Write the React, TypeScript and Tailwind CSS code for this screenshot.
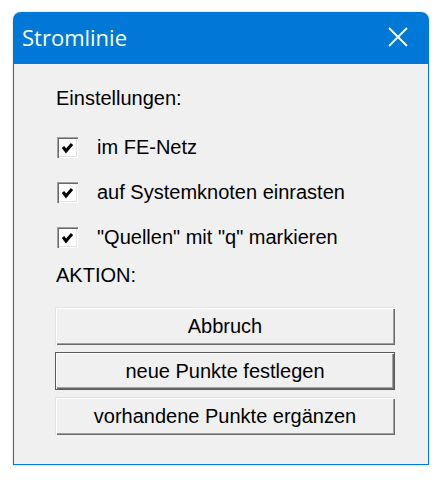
import React from "react";

function CheckBox() {
  return (
    <div className="relative w-[21px] h-[21px] bg-white shrink-0 shadow-[inset_1px_1px_0_#a0a0a0,inset_2px_2px_0_#696969,inset_-1px_-1px_0_#ffffff,inset_-2px_-2px_0_#e3e3e3]">
      <svg className="absolute left-0 top-0" width="21" height="21" viewBox="0 0 21 21">
        <polyline points="6,10 9,14 15,7" fill="none" stroke="#000" strokeWidth="3" strokeLinecap="butt" strokeLinejoin="miter" />
      </svg>
    </div>
  );
}

function Row({ label }: { label: string }) {
  return (
    <div className="flex items-center h-[24px]">
      <div className="ml-[1px]">
        <CheckBox />
      </div>
      <span className="ml-[19px] whitespace-nowrap">{label}</span>
    </div>
  );
}

function Btn({ label, def }: { label: string; def?: boolean }) {
  return (
    <div
      className={
        "w-[340px] h-[38px] flex items-center justify-center bg-[#f0f0f0] whitespace-nowrap " +
        (def
          ? "border border-[#5a5a5a] shadow-[inset_1px_1px_0_#ffffff,inset_-1px_-1px_0_#696969,inset_-2px_-2px_0_#a0a0a0]"
          : "shadow-[inset_1px_1px_0_#e3e3e3,inset_2px_2px_0_#ffffff,inset_-1px_-1px_0_#696969,inset_-2px_-2px_0_#a0a0a0]")
      }
    >
      {label}
    </div>
  );
}

export default function App() {
  return (
    <div className="w-[439px] h-[480px] bg-white overflow-hidden pt-[12px] pl-[13px]">
      <div className="w-[416px] h-[453px] flex flex-col rounded-t-[8px] overflow-hidden shadow-[0_0_2px_rgba(0,0,0,0.25)]">
        <div className="h-[52px] bg-[#0078d7] flex items-center justify-between pl-[9px] pr-[21px] shrink-0">
          <span className="text-white text-[22px] leading-none font-['Segoe_UI','Open_Sans',sans-serif] mt-[-3px]">Stromlinie</span>
          <svg width="20" height="20" viewBox="0 0 20 20" className="mt-[-2px]">
            <path d="M1 1 L19 19 M19 1 L1 19" stroke="#ffffff" strokeWidth="1.8" />
          </svg>
        </div>
        <div className="flex-1 bg-[#f0f0f0] border-x border-b border-[#0078d7] pt-[22px] pl-[42px] text-[20px] leading-[24px] text-black font-['Liberation_Sans',Arial,sans-serif]">
          <div>Einstellungen:</div>
          <div className="mt-[25px] flex flex-col gap-[21px]">
            <Row label="im FE-Netz" />
            <Row label="auf Systemknoten einrasten" />
            <Row label={'"Quellen" mit "q" markieren'} />
          </div>
          <div className="mt-[14px]">AKTION:</div>
          <div className="mt-[20px] ml-[-1px] flex flex-col gap-[7px]">
            <Btn label="Abbruch" />
            <Btn label="neue Punkte festlegen" def />
            <Btn label="vorhandene Punkte ergänzen" />
          </div>
        </div>
      </div>
    </div>
  );
}
